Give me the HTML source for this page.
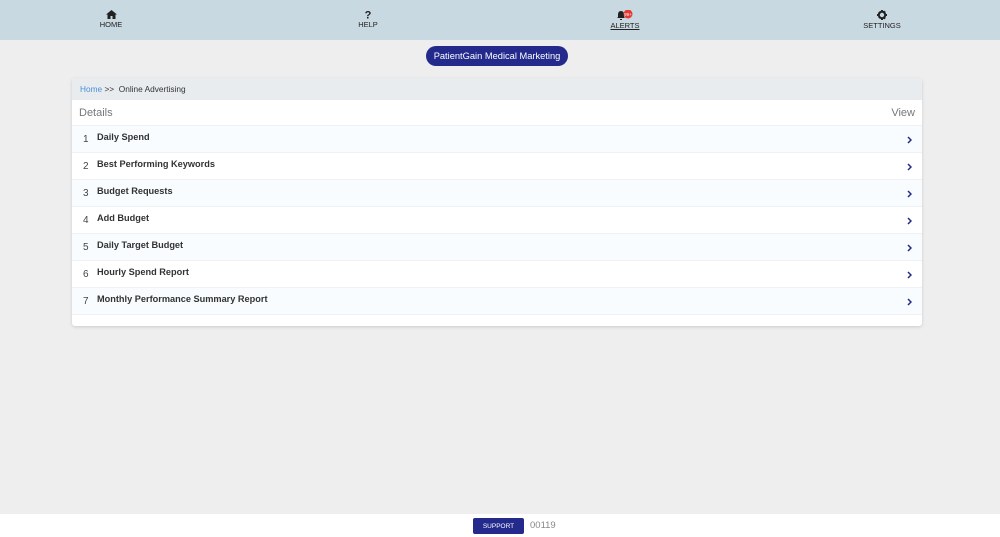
<!DOCTYPE html><html><head><style>
*{margin:0;padding:0;box-sizing:border-box}
body{width:1000px;height:537px;background:#eeeeee;font-family:"Liberation Sans",sans-serif;position:relative;overflow:hidden}
.nav{position:absolute;top:0;left:0;width:1000px;height:40px;background:#c9d9e1}
.ni{position:absolute;top:10px;width:80px;text-align:center;font-size:7.5px;color:#222}
.ni svg{display:block;margin:0 auto 1px}
.btn{position:absolute;left:426px;top:46px;width:142px;height:20px;border-radius:10px;background:#232a8c;color:#fff;font-size:9.3px;text-align:center;line-height:20px}
.card{position:absolute;left:72px;top:78px;width:850px;height:248px;background:#fff;border-radius:3px;box-shadow:0 1px 3px rgba(0,0,0,.15);overflow:hidden}
.bc{height:22px;background:#e9ecef;font-size:8.3px;line-height:22px;padding-left:8px;color:#333}
.bc a{color:#4a90d9}
.hd{height:26px;font-size:11px;color:#777;line-height:27px;padding:0 7px;display:flex;justify-content:space-between;border-bottom:1px solid #eef2f4}
.r{height:27px;position:relative;border-bottom:1px solid #eef2f4}
.r:nth-child(odd){background:#f8fcfe}
.r .n{position:absolute;left:11px;top:8px;color:#444;font-size:10px}
.r .t{position:absolute;left:25px;top:6px;font-weight:bold;color:#333;font-size:9.2px}
.r .c{position:absolute;right:10px;top:10px}
.ft{position:absolute;top:514px;left:0;width:1000px;height:23px;background:#fff}
.sp{position:absolute;left:473px;top:4px;width:51px;height:16px;background:#232a8c;color:#fff;font-size:6.5px;text-align:center;line-height:17px;border-radius:2px}
.num{position:absolute;left:530px;top:6px;font-size:9.5px;color:#888}
</style></head><body>
<div class="nav">
<div class="ni" style="left:71px"><svg width="11" height="9" viewBox="0 0 11 9"><path d="M5.5 0L0 4.5h1.5V9h3V6h2v3h3V4.5H11z" fill="#222"/></svg>HOME</div>
<div class="ni" style="left:328px"><svg width="8" height="9" viewBox="0 0 8 9"><text x="4" y="8.5" font-size="11" font-weight="bold" text-anchor="middle" font-family="Liberation Sans" fill="#222">?</text></svg>HELP</div>
<div class="ni" style="left:585px;text-decoration:underline"><svg width="20" height="10" viewBox="0 0 20 10"><path d="M6 1c-2 0-3 1.5-3 3.5V7L2 8h8L9 7V4.5C9 2.5 8 1 6 1z M5 9h2v1H5z" fill="#222"/><circle cx="13" cy="4" r="4.5" fill="#e53935"/><text x="13" y="5.8" font-size="4.5" fill="#fff" text-anchor="middle" font-family="Liberation Sans">99+</text></svg>ALERTS</div>
<div class="ni" style="left:842px"><svg width="10" height="10" viewBox="0 0 10 10"><circle cx="5" cy="5" r="3.2" fill="none" stroke="#222" stroke-width="2"/><path d="M4 0h2v2H4zM4 8h2v2H4zM0 4h2v2H0zM8 4h2v2H8zM1.2 2.6l1.4-1.4 1 1-1.4 1.4zM6.4 8.4l1.4-1.4 1 1-1.4 1.4zM1.2 7.4l1-1 1.4 1.4-1 1zM6.4 1.6l1-1 1.4 1.4-1 1z" fill="#222"/></svg>SETTINGS</div>
</div>
<div class="btn">PatientGain Medical Marketing</div>
<div class="card">
<div class="bc"><a>Home</a> &gt;&gt;&nbsp; Online Advertising</div>
<div class="hd"><span>Details</span><span>View</span></div>
<div>
<div class="r"><span class="n">1</span><span class="t">Daily Spend</span><svg class="c" width="5" height="8" viewBox="0 0 5 8"><path d="M1 1l3 3-3 3" stroke="#232a8c" stroke-width="1.5" fill="none"/></svg></div>
<div class="r"><span class="n">2</span><span class="t">Best Performing Keywords</span><svg class="c" width="5" height="8" viewBox="0 0 5 8"><path d="M1 1l3 3-3 3" stroke="#232a8c" stroke-width="1.5" fill="none"/></svg></div>
<div class="r"><span class="n">3</span><span class="t">Budget Requests</span><svg class="c" width="5" height="8" viewBox="0 0 5 8"><path d="M1 1l3 3-3 3" stroke="#232a8c" stroke-width="1.5" fill="none"/></svg></div>
<div class="r"><span class="n">4</span><span class="t">Add Budget</span><svg class="c" width="5" height="8" viewBox="0 0 5 8"><path d="M1 1l3 3-3 3" stroke="#232a8c" stroke-width="1.5" fill="none"/></svg></div>
<div class="r"><span class="n">5</span><span class="t">Daily Target Budget</span><svg class="c" width="5" height="8" viewBox="0 0 5 8"><path d="M1 1l3 3-3 3" stroke="#232a8c" stroke-width="1.5" fill="none"/></svg></div>
<div class="r"><span class="n">6</span><span class="t">Hourly Spend Report</span><svg class="c" width="5" height="8" viewBox="0 0 5 8"><path d="M1 1l3 3-3 3" stroke="#232a8c" stroke-width="1.5" fill="none"/></svg></div>
<div class="r"><span class="n">7</span><span class="t">Monthly Performance Summary Report</span><svg class="c" width="5" height="8" viewBox="0 0 5 8"><path d="M1 1l3 3-3 3" stroke="#232a8c" stroke-width="1.5" fill="none"/></svg></div>
</div>
</div>
<div class="ft"><div class="sp">SUPPORT</div><div class="num">00119</div></div>
</body></html>
